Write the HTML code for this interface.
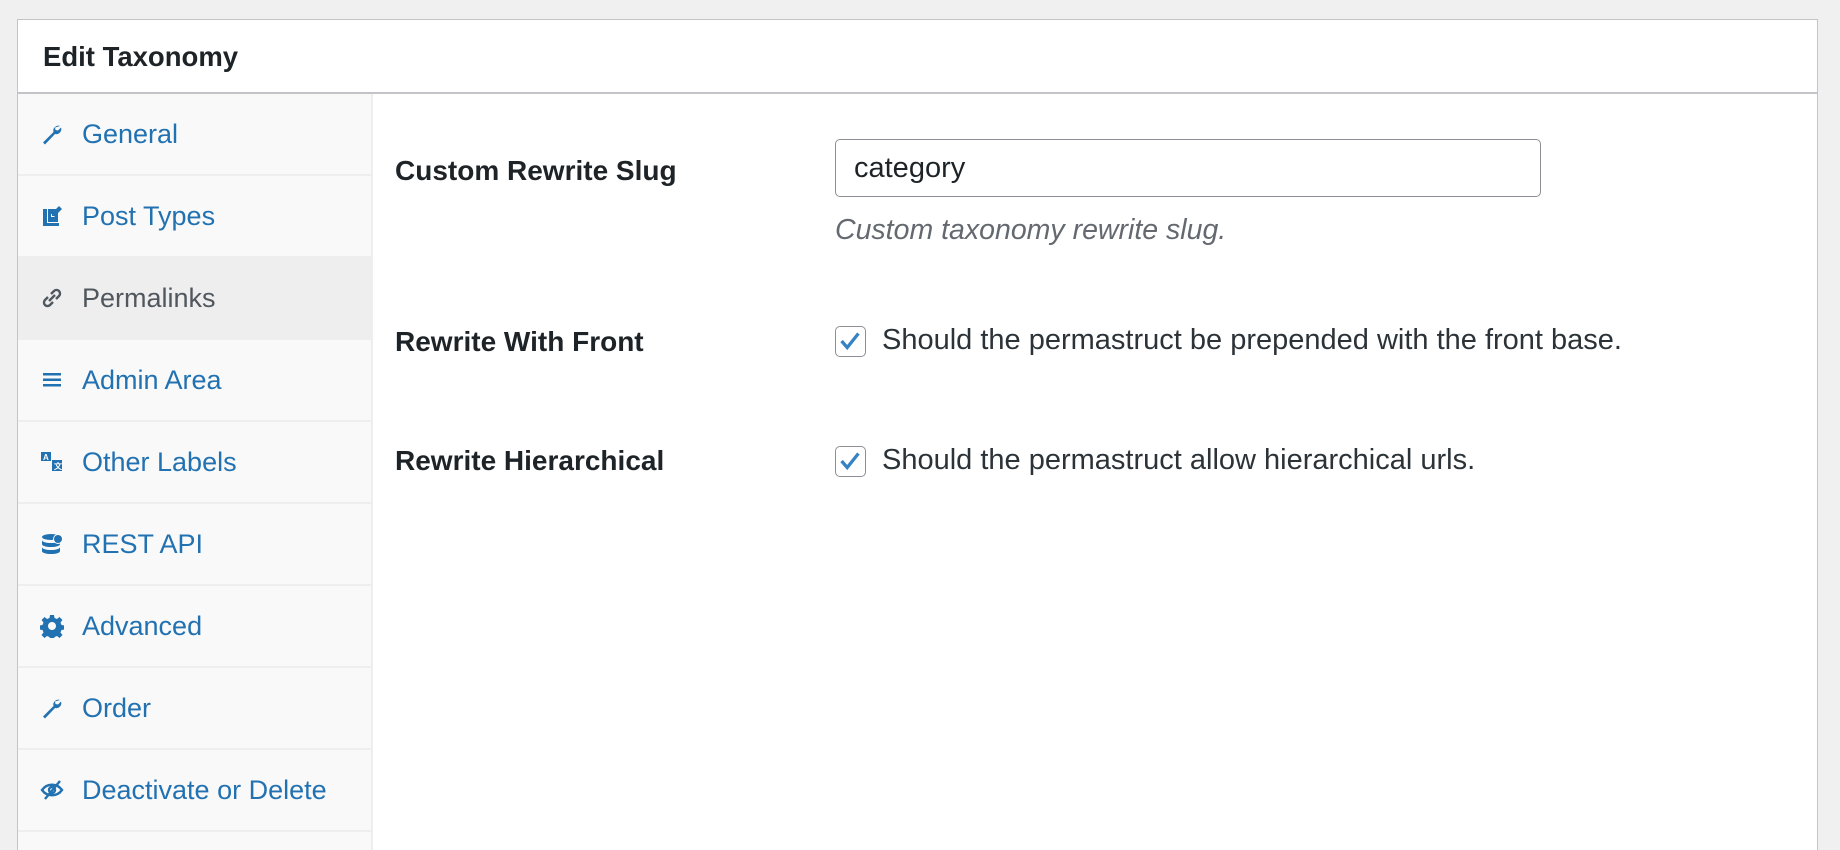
<!DOCTYPE html>
<html style="overflow:hidden"><head><style>
*{box-sizing:border-box;margin:0;padding:0}
html,body{width:1840px;height:850px;overflow:hidden}
body{background:#f0f0f1;font-family:"Liberation Sans",sans-serif;position:relative}
.panel{position:absolute;left:17px;top:19px;width:1801px;height:831px;background:#fff;border:1px solid #c3c4c7;border-bottom:none;overflow:hidden}
.hdr{height:74px;border-bottom:2px solid #c3c4c7;padding-left:25px;font-size:27.5px;font-weight:bold;color:#1d2327;line-height:74px}
.side{position:absolute;left:0;top:74px;width:355px;bottom:0;background:#f9f9f9;border-right:2px solid #eee}
.it{height:82px;border-bottom:2px solid #eee;display:flex;align-items:center;padding-left:22px;color:#2271b1;font-size:27px}
.it.a{background:#eee;color:#50575e}
.it svg{width:24px;height:24px;margin-right:18px;fill:currentColor;flex:none}
.lab{position:absolute;left:377px;font-size:28px;font-weight:bold;color:#1d2327}
.inp{position:absolute;left:817px;top:119px;width:706px;height:58px;border:1.5px solid #8c8f94;border-radius:5px;font-size:29px;color:#1d2327;padding-left:18px;line-height:57px}
.desc{position:absolute;left:817px;top:194px;font-size:28.5px;font-style:italic;color:#646970}
.cb{position:absolute;left:817px;width:31px;height:31px;border:1.5px solid #8c8f94;border-radius:5px;background:#fff}
.cbt{position:absolute;left:864px;font-size:29px;color:#2c3338}
</style></head><body>
<div class="panel">
<div class="hdr">Edit Taxonomy</div>
<div class="side">
<div class="it"><svg viewBox="0 0 24 24"><path d="M20 4a5 5 0 0 0-6.5 6L3 20.5 5 22.5 15 12a5 5 0 0 0 6-6.5l-3 3-2.5-.5-.5-2.5z"/></svg>General</div>
<div class="it"><svg viewBox="0 0 24 24"><path d="M3 5h4v14h12v3H3z M8 5h8l-2 2v3h-3v3h3l4-4v9H8z M19 2l3 3-7 7h-3V9z"/></svg>Post Types</div>
<div class="it a"><svg viewBox="0 0 24 24" style="fill:none;stroke:currentColor;stroke-width:2.4"><path d="M11 8l3-3a3.5 3.5 0 0 1 5 5l-3 3M13 16l-3 3a3.5 3.5 0 0 1-5-5l3-3M9 15l6-6"/></svg>Permalinks</div>
<div class="it"><svg viewBox="0 0 24 24"><path d="M3 5h18v2.5H3zM3 10.5h18V13H3zM3 16h18v2.5H3z"/></svg>Admin Area</div>
<div class="it"><svg viewBox="0 0 24 24"><path d="M1 2h10v9H1z M12 10h10v11H12z"/><text x="3" y="10" font-size="8" fill="#fff" font-weight="bold">A</text><text x="14" y="19" font-size="8" fill="#fff" font-weight="bold">文</text></svg>Other Labels</div>
<div class="it"><svg viewBox="0 0 24 24"><ellipse cx="11" cy="5" rx="9" ry="3"/><path d="M2 8c0 4 18 4 18 0v4c0 4-18 4-18 0zM2 15c0 4 18 4 18 0v4c0 4-18 4-18 0z"/><circle cx="18" cy="7" r="5" fill="#fff"/><circle cx="18" cy="7" r="4"/></svg>REST API</div>
<div class="it"><svg viewBox="0 0 24 24"><path d="M10 1h4l.5 3 2.5 1 2.5-2 3 3-2 2.5 1 2.5 3 .5v4l-3 .5-1 2.5 2 2.5-3 3-2.5-2-2.5 1-.5 3h-4l-.5-3-2.5-1-2.5 2-3-3 2-2.5-1-2.5-3-.5v-4l3-.5 1-2.5-2-2.5 3-3 2.5 2 2.5-1z M12 8a4 4 0 1 0 .01 0z" fill-rule="evenodd"/></svg>Advanced</div>
<div class="it"><svg viewBox="0 0 24 24"><path d="M20 4a5 5 0 0 0-6.5 6L3 20.5 5 22.5 15 12a5 5 0 0 0 6-6.5l-3 3-2.5-.5-.5-2.5z"/></svg>Order</div>
<div class="it"><svg viewBox="0 0 24 24" style="fill:none;stroke:currentColor;stroke-width:2.4"><path d="M2 12c5-7 15-7 20 0-5 7-15 7-20 0zM5 21L20 3"/><circle cx="12" cy="12" r="3"/></svg>Deactivate or Delete</div>
<div class="it"></div>
</div>
<div class="lab" style="top:135px">Custom Rewrite Slug</div>
<div class="inp">category</div>
<div class="desc">Custom taxonomy rewrite slug.</div>
<div class="lab" style="top:306px">Rewrite With Front</div>
<div class="cb" style="top:306px"><svg viewBox="0 0 30 30" width="28" height="28"><path d="M6 15l6 7 12-15" fill="none" stroke="#3582c4" stroke-width="3.5"/></svg></div>
<div class="cbt" style="top:304px">Should the permastruct be prepended with the front base.</div>
<div class="lab" style="top:425px">Rewrite Hierarchical</div>
<div class="cb" style="top:426px"><svg viewBox="0 0 30 30" width="28" height="28"><path d="M6 15l6 7 12-15" fill="none" stroke="#3582c4" stroke-width="3.5"/></svg></div>
<div class="cbt" style="top:424px">Should the permastruct allow hierarchical urls.</div>
</div>
</body></html>
